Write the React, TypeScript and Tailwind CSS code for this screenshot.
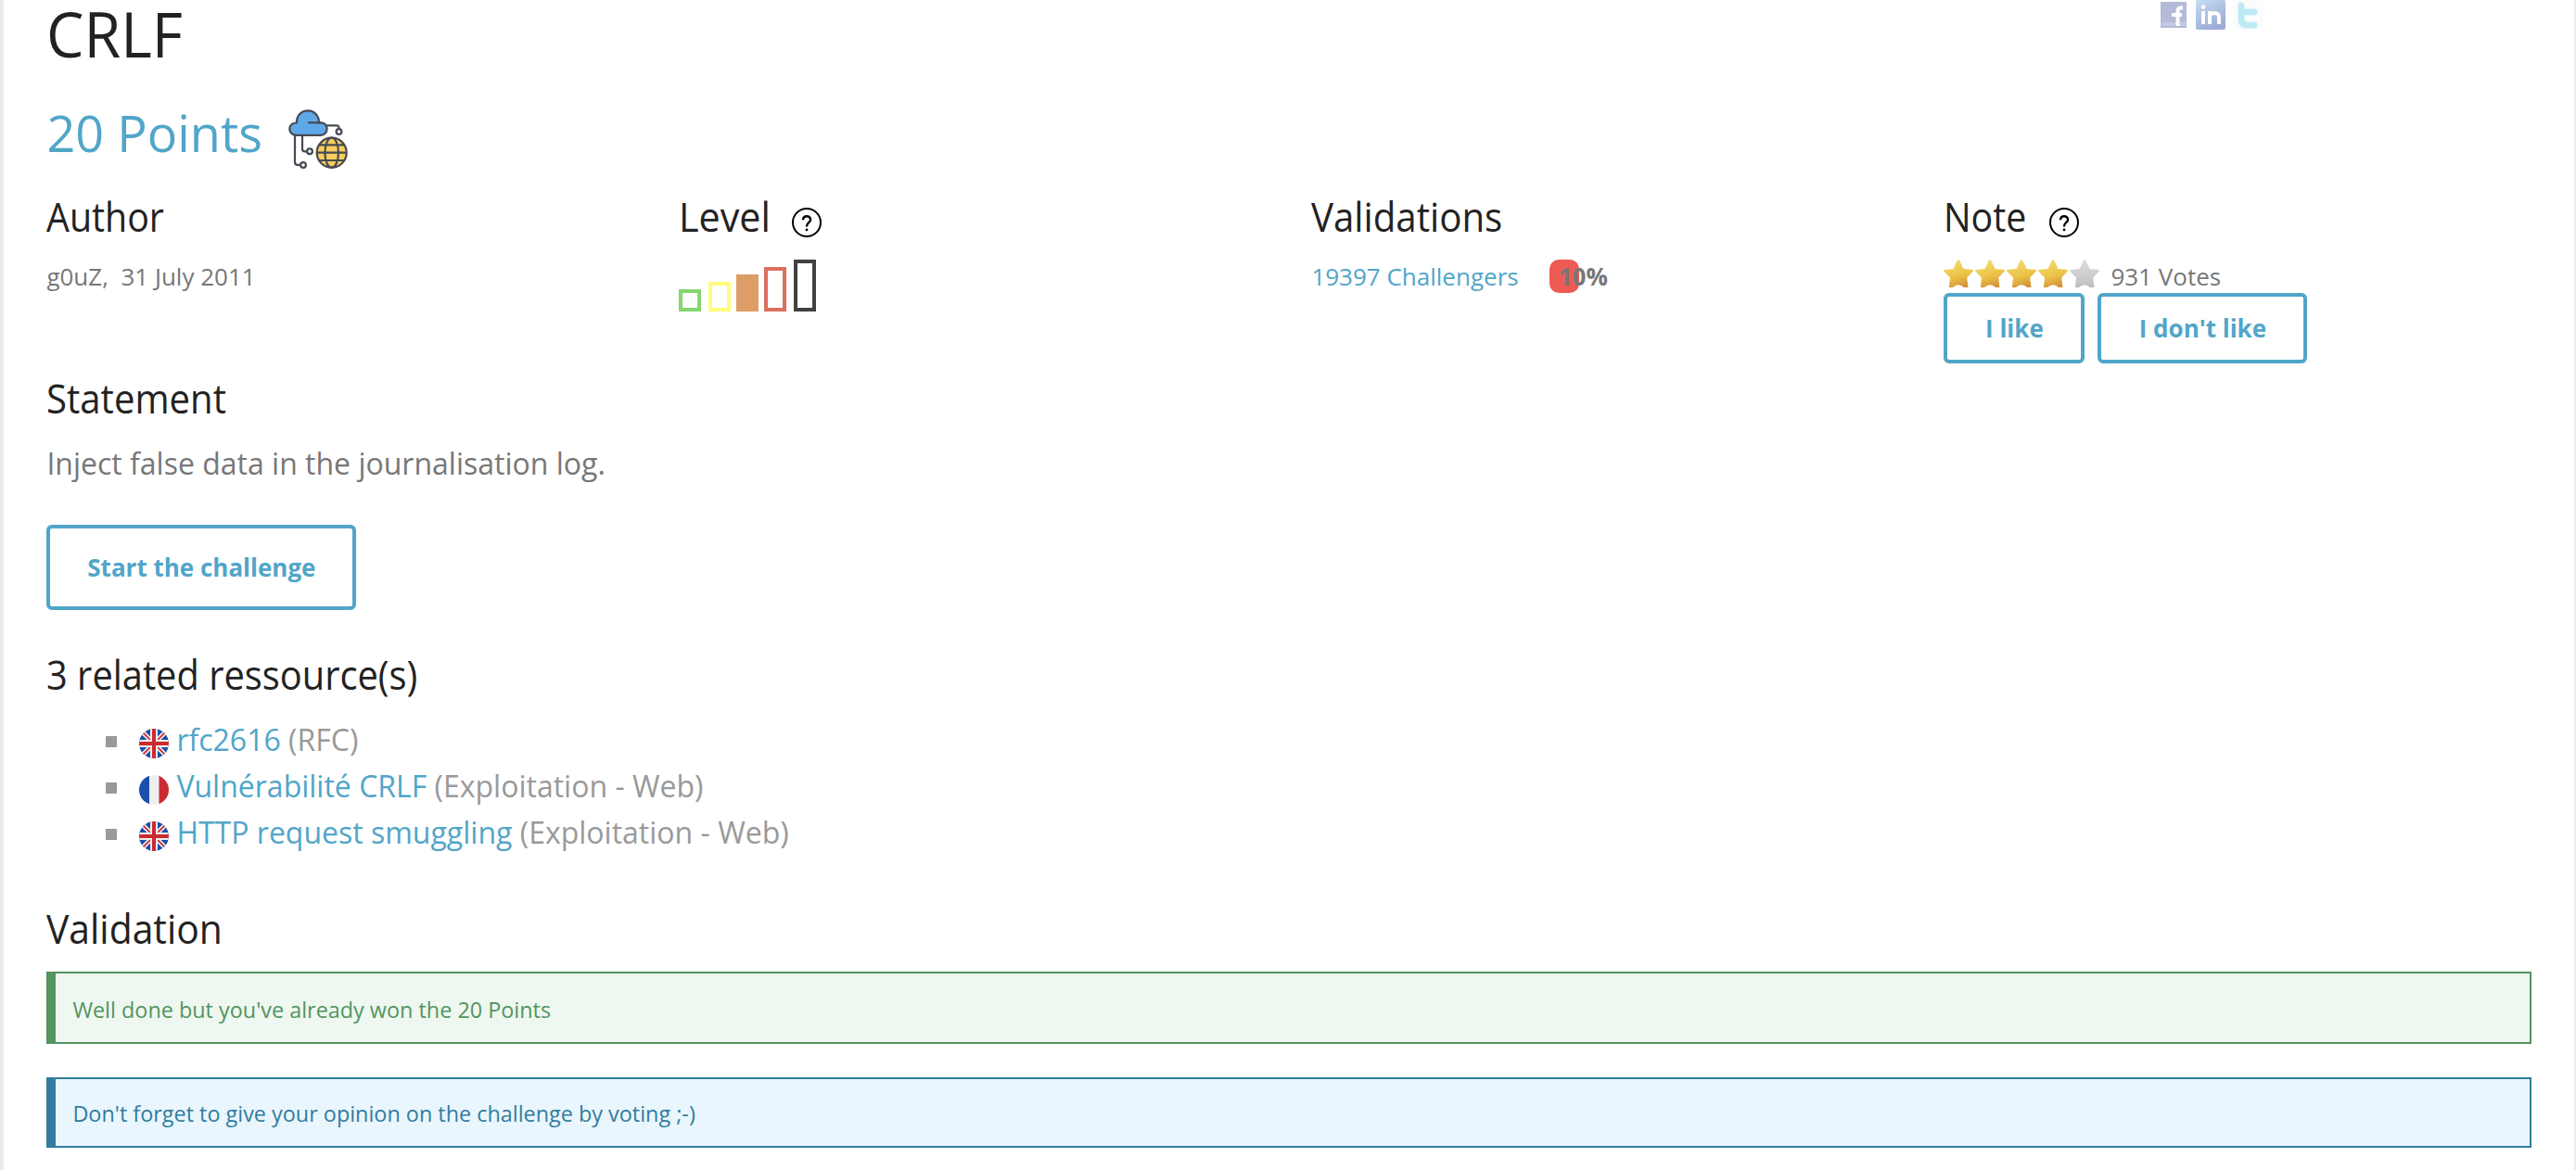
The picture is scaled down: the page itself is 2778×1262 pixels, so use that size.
import React from "react";

const Heading = ({ children, className = "" }: { children: React.ReactNode; className?: string }) => (
  <h3
    className={`pt-px -mb-px origin-left text-[43px] leading-[60px] text-[#222] whitespace-nowrap ${className}`}
  >
    {children}
  </h3>
);

const HelpIcon = ({ className = "" }: { className?: string }) => (
  <svg viewBox="0 0 32 32" className={`w-8 h-8 shrink-0 ${className}`} fill="none" stroke="#000">
    <circle cx="16" cy="16" r="15" strokeWidth="2" />
    <path
      d="M12 13.2C12 10.600 13.700 9.200 16 9.200s4.100 1.500 4.100 3.800c0 3.300-4 2.900-4 6.500v1"
      strokeWidth="2.4"
    />
    <circle cx="16" cy="23.900" r="1.4" fill="#000" stroke="none" />
  </svg>
);

const CloudIcon = () => (
  <svg viewBox="0 0 64 64" className="w-16 h-16 mt-[14px]" fill="none" stroke="#464b53" strokeWidth="2.2">
    <path d="M40 17.300h12q2.500 0 2.500 2.500v1" />
    <path d="M15 28v14.500q0 2.800 2.800 2.800h2" />
    <path d="M7 28v29q0 2.800 2.800 2.800h3" />
    <circle cx="54.500" cy="24" r="2.900" />
    <circle cx="23" cy="45.300" r="2.900" />
    <circle cx="16" cy="60" r="2.900" />
    <path
      d="M9 14.500C8.500 7 14 1.300 21 1.300S33 7 33 14.300h2c4 0 6.600 3 6.600 6.600s-2.600 6.900-6.600 6.900H8c-4 0-6.700-3-6.700-6.700S4 14.500 9 14.500z"
      fill="#5fa8e8"
    />
    <path d="M21 14.300h14" />
    <circle cx="46.700" cy="46.700" r="16" fill="#f7cd5d" />
    <ellipse cx="46.700" cy="46.700" rx="7.300" ry="16" />
    <path d="M30.700 46.700h32M33 38.300h27.400M33 55h27.400" />
  </svg>
);

const Star = ({ on }: { on: boolean }) => (
  <svg viewBox="0 0 32 30" className="w-8 h-[30px]">
    <defs>
      <linearGradient id="gold" x1="0.3" y1="0" x2="0.6" y2="1">
        <stop offset="0" stopColor="#f3da72" />
        <stop offset="0.6" stopColor="#ecc246" />
        <stop offset="1" stopColor="#d2913a" />
      </linearGradient>
      <linearGradient id="silver" x1="0" y1="0" x2="0" y2="1">
        <stop offset="0" stopColor="#dcdcdc" />
        <stop offset="0.6" stopColor="#cdcdcd" />
        <stop offset="1" stopColor="#bdbdbd" />
      </linearGradient>
    </defs>
    <path
      d="M16 .3Q17 .3 17.500 1.500L21.500 10l9.500 1q1.500.5.5 1.800L25.200 19.500l1.300 10.500h-4.500Q16 24.500 10 30H5.800L7 19.500.5 12.800Q-.5 11.500 1 11l9.500-1 4-8.500Q15 .3 16 .3z"
      fill={on ? "url(#gold)" : "url(#silver)"}
    />
  </svg>
);

const Flag = ({ lang }: { lang: string }) => (
  <svg viewBox="0 0 32 32" className="w-8 h-8 mt-[8px] rounded-full">
    {lang === "fr" ? (
      <>
        <path d="M0 0h32v32H0z" fill="#eee" />
        <path d="M0 0h11v32H0z" fill="#1b4fae" />
        <path d="M21.500 0H32v32H21.500z" fill="#cc2a31" />
      </>
    ) : (
      <>
        <path d="M0 0h32v32H0z" fill="#1b4fae" />
        <path d="M0 0l32 32M32 0L0 32" stroke="#eee" strokeWidth="5" />
        <path d="M0 0l32 32M32 0L0 32" stroke="#cc2a31" strokeWidth="1.700" />
        <path d="M16 0v32M0 16h32" stroke="#eee" strokeWidth="8" />
        <path d="M16 0v32M0 16h32" stroke="#cc2a31" strokeWidth="4" />
      </>
    )}
  </svg>
);

const App = () => {
  return (
    <div className="h-[1262px] bg-white border-l-4 border-r-2 border-[#ebebeb] pl-[46.4px] pr-[46px] text-[26px] leading-9 text-[#777] font-['Open_Sans',sans-serif]">
      <div className="flex justify-between">
        <h1 className="origin-left scale-x-[0.96] text-[67px] leading-[72px] text-[#222]">CRLF</h1>
        <Social />
      </div>

      <div className="mt-9 flex h-[70px] items-center gap-[28px]">
        <h2 className="text-[54px] text-[#51a5c9]">20 Points</h2>
        <CloudIcon />
      </div>

      <div className="mt-[25px] grid grid-cols-[682px_682px_682px_1fr] h-[189px]">
        <div>
          <Heading className="scale-x-[0.915]">Author</Heading>
          <p className="mt-[17px]">g0uZ,&nbsp; 31 July 2011</p>
        </div>
        <div>
          <div className="flex h-[60px]">
            <Heading className="scale-x-[0.96]">Level</Heading>
            <HelpIcon className="ml-[19px] mt-[21px]" />
          </div>
          <div className="mt-[17px] flex h-14 items-end">
            <span className="w-6 h-6 border-4 border-[#84d66f]" />
            <span className="ml-2 w-6 h-8 border-4 border-[#fffd7b]" />
            <span className="ml-1.5 w-6 h-10 bg-[#dc9d67]" />
            <span className="ml-1.5 w-6 h-12 border-4 border-[#da705f]" />
            <span className="ml-2 w-6 h-14 border-4 border-[#414141]" />
          </div>
        </div>
        <div>
          <Heading className="scale-x-[0.936]">Validations</Heading>
          <div className="mt-[17px] flex">
            <a className="text-[#51a5c9]">19397 Challengers</a>
            <div className="ml-[33px] w-8 h-9 rounded-[10px] bg-[#ee5a54] pl-[10px] font-bold">10%</div>
          </div>
        </div>
        <div>
          <div className="flex h-[60px]">
            <Heading className="scale-x-[0.915]">Note</Heading>
            <HelpIcon className="ml-4 mt-[21px]" />
          </div>
          <div className="mt-[17px] flex h-9 gap-0.5">
            {[1, 2, 3, 4, 5].map((n) => (
              <Star key={n} on={n < 5} />
            ))}
            <span className="ml-[10px]">931 Votes</span>
          </div>
          <div className="flex gap-[14px] font-bold text-[#51a5c9]">
            <button className="w-[152px] h-[76px] rounded-md border-4 border-[#51a5c9]">I like</button>
            <button className="w-[226px] h-[76px] rounded-md border-4 border-[#51a5c9]">
              I don't like
            </button>
          </div>
        </div>
      </div>

      <Heading className="mt-[7px] scale-x-[0.933]">Statement</Heading>
      <p className="mt-[17px] text-[32px] leading-[48px]">
        Inject false data in the journalisation log.
      </p>
      <button className="mt-[42px] block w-[334px] h-[92px] rounded-md border-4 border-[#51a5c9] font-bold text-[#51a5c9]">
        Start the challenge
      </button>

      <Heading className="mt-[39px] scale-x-[0.926]">3 related ressource(s)</Heading>
      <ul className="mt-4 pl-16 text-[32px] leading-[50px] text-[#999]">
        {data.map((item, index) => (
          <li className="flex items-center" key={index}>
            <span className="mr-6 mt-1 w-3 h-3 bg-[#999]" />
            <Flag lang={item.lang} />
            <span className="ml-2">
              <a className="text-[#51a5c9]">{item.title}</a> ({item.category})
            </span>
          </li>
        ))}
      </ul>

      <Heading className="mt-12 scale-x-[0.95]">Validation</Heading>
      <div className="mt-[17px] flex h-[78px] items-center border-2 border-l-[10px] border-[#539461] bg-[#eef7f0] pl-[18px] pt-[3px] text-[23.4px] text-[#539461]">
        Well done but you've already won the 20 Points
      </div>
      <div className="mt-9 flex h-[76px] items-center border-2 border-l-[10px] border-[#337c9f] bg-[#e9f6fd] pl-[18px] pt-[2px] text-[23.4px] text-[#337c9f]">
        Don't forget to give your opinion on the challenge by voting ;-)
      </div>
    </div>
  );
};

const Social = () => (
  <div className="mr-[290px] flex gap-2">
    <svg viewBox="0 0 32 32" className="w-8 h-8">
      <path d="M2 2h28v28H2z" fill="#b4bbd8" />
      <path d="M3 24h26v4H3z" fill="#c3cae2" />
      <path d="M26 8.500h-2.500q-3 0-3 3.500v16M14 16h11" stroke="#fff" strokeWidth="4" fill="none" />
    </svg>
    <svg viewBox="0 0 32 32" className="w-8 h-8">
      <defs>
        <linearGradient id="in" x1="0" y1="0" x2="0.5" y2="1">
          <stop offset="0" stopColor="#c3def0" />
          <stop offset="1" stopColor="#9dabd8" />
        </linearGradient>
      </defs>
      <rect width="32" height="32" rx="2" fill="url(#in)" />
      <path d="M8 12v14M15 26V12M15 19q0-5 5-5t5 5v7" stroke="#fff" strokeWidth="4" fill="none" />
      <circle cx="8" cy="7.500" r="2.300" fill="#fff" />
    </svg>
    <svg viewBox="0 0 32 32" className="w-8 h-8">
      <rect width="32" height="32" fill="#fafcfd" />
      <path
        d="M9 6v15q0 6 6 6h8M9 13h14"
        stroke="#bdeaf5"
        strokeWidth="7"
        strokeLinecap="round"
        fill="none"
      />
    </svg>
  </div>
);

export default App;

const data = [
  { lang: "en", title: "rfc2616", category: "RFC" },
  { lang: "fr", title: "Vulnérabilité CRLF", category: "Exploitation - Web" },
  { lang: "en", title: "HTTP request smuggling", category: "Exploitation - Web" },
];
